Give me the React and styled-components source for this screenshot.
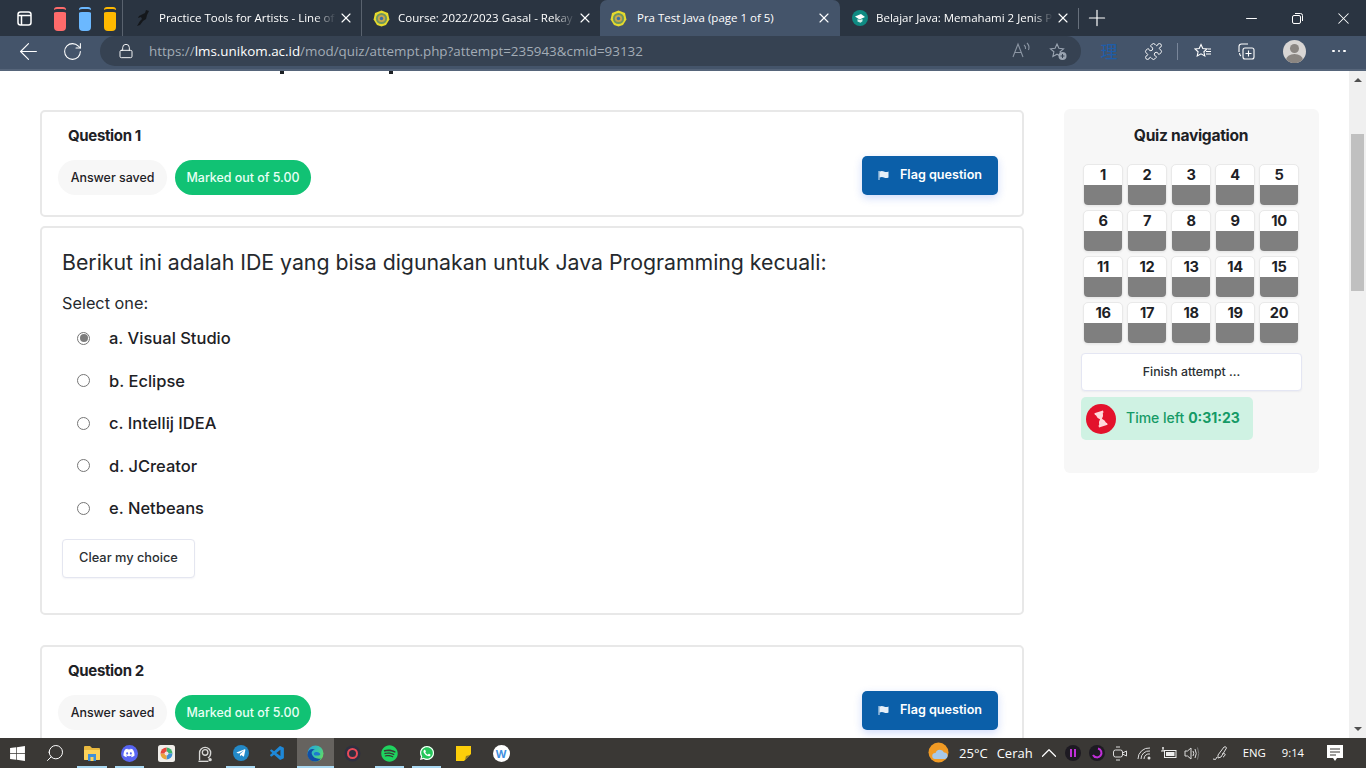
import React from "react";
import styled, { createGlobalStyle } from "styled-components";
import { FaDiscord, FaTelegramPlane, FaSpotify, FaWhatsapp, FaWindows } from "react-icons/fa";
import { VscVscode } from "react-icons/vsc";
import { ArrowLeft, RotateCw, Lock, X, Plus, Minus, ChevronUp, Search, Puzzle } from "lucide-react";

const Global = createGlobalStyle`
  html, body { margin: 0; padding: 0; overflow: hidden; background: #fff; }
  * { box-sizing: border-box; }
`;
const sans = `Inter, "Noto Sans", sans-serif`;
const ui = `"Open Sans", "Noto Sans", sans-serif`;

const Shell = styled.div`
  width: 1366px; height: 768px; display: flex; flex-direction: column; overflow: hidden; font-family: ${sans}; color: #1d2125;
`;
/* ---------- browser chrome ---------- */
const TabStrip = styled.div`
  height: 36px; flex: none; background: #2a3441; display: flex; align-items: stretch; color: #fff;
`;
const StripTools = styled.div`
  width: 122px; flex: none; display: flex; align-items: center; padding-left: 17px;
`;
const Bottle = styled.span`
  width: 12px; height: 24px; margin-left: ${p => p.$ml}px; margin-top: 2px; flex: none; background: ${p => p.$c};
  border-radius: 3px 3px 4px 4px; border-top: 2px solid ${p => p.$c}; position: relative;
  box-shadow: inset 0 3px 0 #2a3441;
`;
const Tab = styled.div`
  width: ${p => p.$w}px; flex: none; display: flex; align-items: center; padding: 0 ${p => p.$active ? 8 : 7}px 0 ${p => p.$active ? 10 : 11}px;
  background: ${p => p.$active ? "#44546a" : "transparent"};
  border-radius: ${p => p.$active ? "7px 7px 0 0" : "0"};
  border-left: ${p => p.$sep ? "1px solid #59626e" : "0"};
  background-clip: ${p => p.$sep ? "padding-box" : "border-box"};
`;
const Fav = styled.span` width: 17px; height: 17px; flex: none; display: flex; align-items: center; justify-content: center; margin-right: ${p => p.$active ? 10 : 8}px; `;
const TabTitle = styled.span`
  flex: 1; font: 11.5px/16px ${ui}; white-space: nowrap; overflow: hidden; color: #fff; margin-right: 2px;
  mask-image: ${p => p.$fade ? "linear-gradient(90deg,#000 88%,transparent 100%)" : "none"};
  -webkit-mask-image: ${p => p.$fade ? "linear-gradient(90deg,#000 88%,transparent 100%)" : "none"};
`;
const TabClose = styled(X)` flex: none; color: #fff; `;
const NewTab = styled.div`
  flex: 1; display: flex; align-items: center;
`;
const Sep = styled.span` width: 1px; height: 21px; background: #67707c; margin-right: 5px; flex: none; `;
const WinBtns = styled.div` display: flex; align-items: center; margin-left: auto; `;
const WinBtn = styled.span` width: 46px; display: flex; justify-content: center; color: #fff; `;

const AddressRow = styled.div`
  height: 35px; flex: none; background: #44546a; border-bottom: 2px solid #56657a;
  display: flex; align-items: center; color: #fff; padding-bottom: 3px;
`;
const NavIcons = styled.div` width: 100px; flex: none; display: flex; align-items: center; padding-left: 15px; gap: 20px; `;
const Pill = styled.div`
  width: 981px; height: 30px; flex: none; border-radius: 15px; background: #364252; display: flex; align-items: center; padding: 0 5px 0 18px;
`;
const Url = styled.span`
  font: 13.4px/18px ${ui}; color: #a3acb6; margin-left: 15px; white-space: nowrap; flex: 1;
  b { color: #fff; font-weight: 400; }
`;
const ToolArea = styled.div` flex: 1; display: flex; align-items: center; color: #fff; padding-left: 6px; `;
const ToolSlot = styled.span` width: ${p => p.$w}px; flex: none; display: flex; justify-content: center; align-items: center; `;
const Kanji = styled.span` font: 17px/20px "Noto Sans CJK SC", sans-serif; color: #1f5da8; `;
const ToolSep = styled.span` width: 1px; height: 17px; background: #79869a; flex: none; margin: 0 1px 0 2px; `;
const Avatar = styled.span`
  width: 23px; height: 23px; border-radius: 50%; background: #d9d6d4; flex: none; display: block; overflow: hidden;
`;
const Dots = styled.span` display: flex; gap: 3px; span { width: 2.5px; height: 2.5px; border-radius: 50%; background: #fff; } `;

/* ---------- page ---------- */
const Viewport = styled.div` flex: 1; min-height: 0; display: flex; overflow: hidden; background: #fff; `;
const Content = styled.div` flex: 1; min-width: 0; position: relative; display: flex; padding: 39px 30px 0 40px; gap: 40px; `;
const Descender = styled.span`
  position: absolute; top: 0; left: ${p => p.$x}px; width: 4px; height: 3px; background: #1d2125;
`;
const Column = styled.div` width: 984px; flex: none; display: flex; flex-direction: column; `;
const Card = styled.section`
  flex: none; border: 2px solid #e8e8e8; border-radius: 5px; background: #fff;
  margin-top: ${p => p.$mt || 0}px;
`;
const InfoCard = styled(Card)` height: 107px; padding: 14px 24px 0 16px; display: flex; justify-content: space-between; `;
const InfoLeft = styled.div` display: flex; flex-direction: column; `;
const QTitle = styled.h3` margin: 0 0 15px 10px; font: 700 15px/19px ${sans}; letter-spacing: -0.35px; color: #1d2125; `;
const Pills = styled.div` display: flex; gap: 8px; `;
const Tag = styled.span`
  height: 35px; width: ${p => p.$w}px; border-radius: 18px; display: flex; align-items: center; justify-content: center;
  font: 500 12.4px/16px ${sans}; background: ${p => p.$green ? "#11c274" : "#f7f7f7"}; color: ${p => p.$green ? "#e8fff4" : "#1d2125"};
`;
const FlagBtn = styled.button`
  width: 136px; height: 39px; margin-top: 30px; border: 0; border-radius: 5px; background: #0b5fa9; color: #fff; display: flex; align-items: center; justify-content: center; gap: 11px;
  font: 600 12.6px/16px ${sans}; padding: 0 0 2px; box-shadow: 0 3px 8px rgba(40,90,230,.22);
`;
const QuestionCard = styled(Card)` height: 389px; margin-top: 9px; padding: 21px 20px 0; `;
const Prompt = styled.div` font: 400 21.3px/27px ${sans}; color: #25292d; letter-spacing: -0.02px; white-space: nowrap; `;
const Select = styled.div` font: 400 16.3px/20px ${sans}; margin-top: 17px; color: #25292d; `;
const Options = styled.div` margin-top: 4px; display: flex; flex-direction: column; `;
const Option = styled.label`
  height: 42.5px; display: flex; align-items: center; font: 500 16.5px/20px ${sans}; color: #1d2125; padding-left: 15px; gap: 19px;
`;
const Radio = styled.span`
  width: 13px; height: 13px; border-radius: 50%; border: 1px solid #767676; background: #fff; flex: none; display: flex; align-items: center; justify-content: center;
  &::after { content: ""; width: 8px; height: 8px; border-radius: 50%; background: ${p => p.$on ? "#7d7d7d" : "transparent"}; }
`;
const ClearBtn = styled.button`
  margin-top: 9px; width: 133px; height: 39px; background: #fff; border: 1px solid #e4e6f0; border-radius: 4px; font: 500 12.8px/16px ${sans}; color: #2b2f33; padding: 0; box-shadow: 0 1px 2px rgba(60,70,120,.06);
`;

const Panel = styled.aside`
  width: 255px; height: 364px; flex: none; margin-top: -1px; border-radius: 6px; background: #f7f7f7; padding: 17px 17px 0 17px; display: flex; flex-direction: column;
`;
const PanelTitle = styled.h3` margin: 0 1px 0 0; font: 700 15.6px/20px ${sans}; letter-spacing: -0.3px; text-align: center; color: #1d2125; `;
const Grid = styled.div` display: grid; grid-template-columns: repeat(5, 40px); column-gap: 4px; row-gap: 4px; margin: 18px 0 0 2px; `;
const Cell = styled.div`
  height: 42px; border: 1px solid #e9e9e9; border-radius: 5px; background: #fff; overflow: hidden; display: flex; flex-direction: column; box-shadow: 0 1px 2px rgba(0,0,0,.05);
`;
const CellNum = styled.span` height: 20px; flex: none; text-align: center; font: 700 14.6px/20px ${sans}; letter-spacing: -0.3px; color: #1d2125; `;
const CellFill = styled.span` flex: 1; background: #7f7f7f; `;
const Finish = styled.button`
  margin-top: 9px; width: 221px; height: 38px; background: #fff; border: 1px solid #e4e6f3; border-radius: 4px; font: 500 12.3px/16px ${sans}; color: #2b2f33; padding: 0; box-shadow: 0 1px 2px rgba(60,70,120,.06);
`;
const Timer = styled.div`
  margin-top: 6px; width: 172px; height: 43px; border-radius: 5px; background: #cff2e3; display: flex; align-items: center; padding-left: 5px; gap: 10px;
  font: 500 14px/18px ${sans}; color: #159a66; white-space: nowrap;
  b { font-weight: 700; }
`;
const TimerText = styled.span` padding-bottom: 2px; `;
const TimerIcon = styled.span` width: 30px; height: 30px; border-radius: 50%; background: #e3122c; flex: none; display: flex; align-items: center; justify-content: center; `;

const Scrollbar = styled.div` width: 17px; flex: none; background: #f0f0f0; display: flex; flex-direction: column; align-items: center; `;
const Arrow = styled.span`
  flex: none; width: 0; height: 0; border-left: 4px solid transparent; border-right: 4px solid transparent;
  ${p => p.$down ? "border-top: 4px solid #505050; margin: auto 0 7px;" : "border-bottom: 4px solid #505050; margin-top: 7px;"}
`;
const Thumb = styled.span` width: 13px; height: 157px; background: #c0c0c0; margin-top: 52px; flex: none; `;

/* ---------- taskbar ---------- */
const Taskbar = styled.div` height: 30px; flex: none; background: #3a3835; display: flex; align-items: stretch; color: #fff; `;
const Apps = styled.div` display: flex; margin-left: -1px; `;
const AppBtn = styled.span`
  width: 37.2px; flex: none; display: flex; align-items: center; justify-content: center; position: relative;
  background: ${p => p.$focus ? "#66635f" : "transparent"};
  &::after { content: ""; display: ${p => p.$run ? "block" : "none"}; position: absolute; bottom: 0; left: ${p => p.$focus ? 0 : 4}px; right: ${p => p.$focus ? 0 : 4}px; height: 2px; background: #a9d8f2; }
`;
const Disc = styled.span`
  width: ${p => p.$s}px; height: ${p => p.$s}px; border-radius: 50%; background: ${p => p.$c}; display: flex; align-items: center; justify-content: center;
`;
const Tray = styled.div` margin-left: auto; display: flex; align-items: center; font: 13px/18px ${ui}; color: #fff; `;
const TrayText = styled.span` flex: none; margin-left: ${p => p.$ml || 0}px; font-size: ${p => p.$fs || 13}px; white-space: nowrap; `;
const TraySlot = styled.span` flex: none; display: flex; justify-content: center; align-items: center; width: ${p => p.$w}px; margin-left: ${p => p.$ml || 0}px; `;
const WBadge = styled.span` width: 17px; height: 17px; border-radius: 50%; background: #fff; color: #3f8fe0; font: 700 11px/17px ${ui}; text-align: center; `;

/* ---------- drawn icons ---------- */
const Unikom = ({ s = 17 }) => (
  <svg width={s} height={s} viewBox="0 0 17 17">
    <path d="M8.5.6 15 3l1.4 6.4-3.4 5.6-4.5 1.4L4 15 .6 9.4 2 3z" fill="#e6da2c" />
    <circle cx="8.5" cy="8.5" r="5.6" fill="#6f9560" />
    <circle cx="8.5" cy="8.5" r="3.6" fill="#c8a84a" />
    <circle cx="8.5" cy="8.5" r="1.7" fill="#3b6ea8" />
  </svg>
);
const Runner = () => (
  <svg width="16" height="16" viewBox="0 0 16 16"><path d="M11 0l3 1-2 4-1 4-3 2-3 4-3 1 3-5 2-2-1-2-3 1 1-2 4-2 2-1z" fill="#14171b" /></svg>
);
const Academy = () => (
  <svg width="16" height="16" viewBox="0 0 16 16"><circle cx="8" cy="8" r="8" fill="#0f8a82" /><path d="M3 6.5 9 4l4 3-5.5 2.5z" fill="#fff" /><path d="M5.5 9v2.5l3 1.2 2-1.5V9L7.500 10z" fill="#d7efe9" /></svg>
);
const TabsIcon = () => (
  <svg width="15" height="15" viewBox="0 0 15 15" fill="none" stroke="#fff" strokeWidth="1.5"><rect x="1" y="1" width="13" height="13" rx="2.500" /><path d="M1 4.500h13M4.500 4.500V14" /></svg>
);
const Restore = () => (
  <svg width="11" height="11" viewBox="0 0 11 11" fill="none" stroke="#fff"><rect x=".5" y="2.500" width="8" height="8" rx="1.500" /><path d="M3 .5h5.500a2 2 0 0 1 2 2V8" /></svg>
);
const ReadAloud = () => (
  <svg width="20" height="18" viewBox="0 0 20 18" fill="none" stroke="#8b95a3" strokeWidth="1.100"><path d="M1 15 6 2l5 13M3 10.500h6" /><path d="M12 3q2 1.500 1.500 4M15 1q3 3 1.500 7" /></svg>
);
const StarPlus = () => (
  <svg width="19" height="19" viewBox="0 0 19 19"><path d="M8 2l1.900 4.300 4.600.5-3.400 3 1 4.600L8 12.200l-4.100 2.200 1-4.600-3.400-3 4.600-.5z" fill="none" stroke="#9aa4b1" strokeWidth="1.100" /><circle cx="13.500" cy="14" r="4" fill="#9aa4b1" /><path d="M11.500 14h4M13.500 12v4" stroke="#364252" /></svg>
);
const Favs = () => (
  <svg width="18" height="17" viewBox="0 0 18 17" fill="none" stroke="#fff" strokeWidth="1.100"><path d="M7 1.500l1.800 4 4.200.5-3.100 2.800.9 4.200L7 10.800l-3.800 2.200.9-4.200L1 6l4.200-.5z" /><path d="M12 8.500h5M12 11h5M14 6h3" /></svg>
);
const Collections = () => (
  <svg width="18" height="18" viewBox="0 0 18 18" fill="none" stroke="#fff" strokeWidth="1.100"><path d="M2 10V4.500A2.500 2.500 0 0 1 4.500 2H11" /><path d="M4 14Q2.500 13 2.500 11" /><rect x="6" y="6" width="11" height="11" rx="2" /><path d="M11.500 8.500v6M8.500 11.500h6" /></svg>
);
const Person = () => (
  <svg width="23" height="23" viewBox="0 0 23 23"><circle cx="11.500" cy="8.500" r="4.500" fill="#8b8682" /><ellipse cx="11.500" cy="20" rx="8.500" ry="6" fill="#8b8682" /></svg>
);
const FlagIcon = () => (
  <svg width="11" height="10" viewBox="0 0 11 10"><path d="M1 1v9" stroke="#dfeaf5" /><path d="M1.500 1.500Q4 .5 6 1.500T10.500 1.500V7.500Q8 8.500 6 7.500T1.500 7.500z" fill="#e6eff8" /></svg>
);
const Hourglass = () => (
  <svg width="16" height="18" viewBox="0 0 16 18"><g transform="rotate(-18 8 9)"><path d="M3.500 1.500h9v2h-.8Q11.500 7 9 9q2.500 2 2.700 5.500h.8v2h-9v-2h.8Q4.500 11 7 9 4.500 7 4.300 3.500h-.8z" fill="#ffd9dc" /></g></svg>
);
const Folder = () => (
  <svg width="18" height="16" viewBox="0 0 18 16"><path d="M1 2a1 1 0 0 1 1-1h5l2 2h7a1 1 0 0 1 1 1v10a1 1 0 0 1-1 1H2a1 1 0 0 1-1-1z" fill="#e9b93f" /><path d="M1 5h16v9a1 1 0 0 1-1 1H2a1 1 0 0 1-1-1z" fill="#fcd25a" /><rect x="5" y="9" width="8" height="7" fill="#3f8fd8" /><rect x="7.500" y="12" width="3" height="4" fill="#fcd25a" /></svg>
);
const PhotoApp = () => (
  <svg width="17" height="17" viewBox="0 0 17 17"><rect width="17" height="17" rx="2.500" fill="#f0eeea" /><path d="M8.500 2.500a6 6 0 0 1 6 6h-6z" fill="#3fb36b" /><path d="M14.500 8.500a6 6 0 0 1-6 6v-6z" fill="#3d8fd6" /><path d="M8.500 14.500a6 6 0 0 1-6-6h6z" fill="#e8a33a" /><path d="M2.500 8.500a6 6 0 0 1 6-6v6z" fill="#e5483c" /><circle cx="8.500" cy="8.500" r="2" fill="#f4dfe0" /></svg>
);
const Recorder = () => (
  <svg width="20" height="20" viewBox="0 0 18 18" fill="none" stroke="#d8d8d6" strokeWidth="1.200"><path d="M5 15.500V9a5 5 0 1 1 10 0c0 2-1 3.500-2.500 4.500" /><circle cx="10" cy="8.500" r="2.500" /><path d="M4 16.500h9" /><circle cx="14.500" cy="15" r="1.500" fill="#d8d8d6" stroke="none" /></svg>
);
const Edge = () => (
  <svg width="17" height="17" viewBox="0 0 17 17">
    <defs><linearGradient id="eg" x1="0" y1="0" x2="1" y2=".6"><stop offset="0" stopColor="#2a9fe0" /><stop offset=".55" stopColor="#35c0b0" /><stop offset="1" stopColor="#5fd86a" /></linearGradient></defs>
    <circle cx="8.500" cy="8.500" r="8" fill="url(#eg)" />
    <path d="M.5 9C1 4.500 5 3 8 4.500c-2.500.5-4 2.500-3 5s4 5 9 4c-1.500 2-3.500 3-5.500 3C3.500 16.500.5 13 .5 9z" fill="#0f4fa8" />
    <path d="M7 8c1-1.500 4-1.500 5.500 0s.5 2.500-1 2.500H8.500C7 10.500 6.500 9 7 8z" fill="#1d78cf" />
  </svg>
);
const RingApp = () => (
  <svg width="17" height="17" viewBox="0 0 17 17"><circle cx="8.500" cy="8.500" r="8" fill="#2e2f40" /><circle cx="8.500" cy="8.500" r="4.500" fill="none" stroke="#ea4a58" strokeWidth="2" /></svg>
);
const Sticky = () => (
  <svg width="15" height="15" viewBox="0 0 15 15"><rect width="15" height="15" fill="#fcce0a" /><path d="M15 8v7H8z" fill="#3a3835" /><path d="M14 9l-5 5 1-4z" fill="#8f7a2b" /></svg>
);
const Weather = () => (
  <svg width="22" height="22" viewBox="0 0 22 22"><circle cx="10.500" cy="10.500" r="10" fill="#f09a24" /><path d="M7 17a3 3 0 0 1 .5-6 4.500 4.500 0 0 1 8.500-.5 3.300 3.300 0 0 1 1 6.500z" fill="#a7c9ea" /></svg>
);
const PauseBadge = () => (
  <svg width="16" height="16" viewBox="0 0 16 16"><circle cx="8" cy="8" r="8" fill="#1d1a22" /><path d="M5 4h2v8H5zM9 4h2v8H9z" fill="#c02fd8" /></svg>
);
const RingBadge = () => (
  <svg width="16" height="16" viewBox="0 0 16 16"><circle cx="8" cy="8" r="8" fill="#1d1a22" /><path d="M9 3.500a4.500 4.500 0 1 1-5 6.500" fill="none" stroke="#c02fd8" strokeWidth="2" /></svg>
);
const CamTray = () => (
  <svg width="16" height="17" viewBox="0 0 16 17" fill="none" stroke="#ddd"><rect x="1.500" y="5" width="9" height="7" rx="2" /><path d="M10.500 8l4-2v5l-4-2M4 2h4M4 15h4" /></svg>
);
const WifiTray = () => (
  <svg width="15" height="15" viewBox="0 0 15 15" fill="none" stroke="#ddd"><path d="M1 13A11 11 0 0 1 13 2M4 13a8 8 0 0 1 9-8M7 13a5 5 0 0 1 6-5" /><circle cx="12" cy="12" r="1.500" fill="#ddd" stroke="none" /></svg>
);
const BatteryTray = () => (
  <svg width="16" height="13" viewBox="0 0 16 13"><rect x="3.500" y="3.500" width="11.500" height="7" fill="none" stroke="#eee" /><rect x="5" y="5" width="8.500" height="4" fill="#eee" /><path d="M0 4h4M2 0v4M1 1h2" stroke="#eee" /></svg>
);
const VolumeTray = () => (
  <svg width="16" height="15" viewBox="0 0 16 15" fill="none" stroke="#ddd"><path d="M1 5h2.500L7 2v11l-3.500-3H1z" /><path d="M9 5q1.500 2.500 0 5M11 3q2.500 4.500 0 9" /><path d="M13.500 1.500q2.500 6 0 12" stroke="#777" /></svg>
);
const PenTray = () => (
  <svg width="17" height="17" viewBox="0 0 17 17" fill="none" stroke="#ddd"><path d="M6 10l6-8q2-1 2.500 1L9 12l-3 1zM1 14q3 2 4-2M10 9q4-1 3 1t-2 2" /></svg>
);
const Bell = () => (
  <svg width="16" height="16" viewBox="0 0 16 16"><path d="M0 0h16v13h-6l-2 3-2-3H0z" fill="#fff" /><path d="M3 4h10M3 7h10M3 10h6" stroke="#3a3835" /></svg>
);

const questions = ["a. Visual Studio", "b. Eclipse", "c. Intellij IDEA", "d. JCreator", "e. Netbeans"];
const numbers = Array.from({ length: 20 }, (_, i) => i + 1);

const Info = ({ n, mt }) => (
  <InfoCard $mt={mt}>
    <InfoLeft>
      <QTitle>Question {n}</QTitle>
      <Pills>
        <Tag $w={109}>Answer saved</Tag>
        <Tag $w={136} $green>Marked out of 5.00</Tag>
      </Pills>
    </InfoLeft>
    <FlagBtn><FlagIcon />Flag question</FlagBtn>
  </InfoCard>
);

export default function App() {
  return (
    <Shell>
      <Global />
      <TabStrip>
        <StripTools>
          <TabsIcon />
          <Bottle $c="#ff6b6b" $ml={22} />
          <Bottle $c="#6bb8ff" $ml={13} />
          <Bottle $c="#ffb900" $ml={13} />
        </StripTools>
        <Tab $w={239} $sep><Fav><Runner /></Fav><TabTitle $fade>Practice Tools for Artists - Line of</TabTitle><TabClose size={16} strokeWidth={1.7} /></Tab>
        <Tab $w={239} $sep><Fav><Unikom /></Fav><TabTitle $fade>Course: 2022/2023 Gasal - Rekay</TabTitle><TabClose size={16} strokeWidth={1.7} /></Tab>
        <Tab $w={240} $active><Fav $active><Unikom /></Fav><TabTitle>Pra Test Java (page 1 of 5)</TabTitle><TabClose size={16} strokeWidth={1.7} /></Tab>
        <Tab $w={238}><Fav><Academy /></Fav><TabTitle $fade>Belajar Java: Memahami 2 Jenis P</TabTitle><TabClose size={16} strokeWidth={1.7} /></Tab>
        <NewTab>
          <Sep />
          <Plus size={26} strokeWidth={1.1} />
          <WinBtns>
            <WinBtn><Minus size={17} strokeWidth={1.4} /></WinBtn>
            <WinBtn><Restore /></WinBtn>
            <WinBtn><X size={19} strokeWidth={1.3} /></WinBtn>
          </WinBtns>
        </NewTab>
      </TabStrip>
      <AddressRow>
        <NavIcons>
          <ArrowLeft size={27} strokeWidth={1} />
          <RotateCw size={21} strokeWidth={1.2} />
        </NavIcons>
        <Pill>
          <Lock size={16} strokeWidth={1.4} color="#fff" />
          <Url>https://<b>lms.unikom.ac.id</b>/mod/quiz/attempt.php?attempt=235943&amp;cmid=93132</Url>
          <ToolSlot $w={36}><ReadAloud /></ToolSlot>
          <ToolSlot $w={36}><StarPlus /></ToolSlot>
        </Pill>
        <ToolArea>
          <ToolSlot $w={44}><Kanji>理</Kanji></ToolSlot>
          <ToolSlot $w={44}><Puzzle size={19} strokeWidth={1.2} /></ToolSlot>
          <ToolSep />
          <ToolSlot $w={48}><Favs /></ToolSlot>
          <ToolSlot $w={38}><Collections /></ToolSlot>
          <ToolSlot $w={58}><Avatar><Person /></Avatar></ToolSlot>
          <ToolSlot $w={32}><Dots><span /><span /><span /></Dots></ToolSlot>
        </ToolArea>
      </AddressRow>
      <Viewport>
        <Content>
          <Descender $x={280} />
          <Descender $x={389} />
          <Column>
            <Info n={1} />
            <QuestionCard>
              <Prompt>Berikut ini adalah IDE yang bisa digunakan untuk Java Programming kecuali:</Prompt>
              <Select>Select one:</Select>
              <Options>
                {questions.map((q, i) => (
                  <Option key={q}><Radio $on={i === 0} />{q}</Option>
                ))}
              </Options>
              <ClearBtn>Clear my choice</ClearBtn>
            </QuestionCard>
            <Info n={2} mt={30} />
          </Column>
          <Panel>
            <PanelTitle>Quiz navigation</PanelTitle>
            <Grid>
              {numbers.map(n => (
                <Cell key={n}><CellNum>{n}</CellNum><CellFill /></Cell>
              ))}
            </Grid>
            <Finish>Finish attempt ...</Finish>
            <Timer><TimerIcon><Hourglass /></TimerIcon><TimerText>Time left <b>0:31:23</b></TimerText></Timer>
          </Panel>
        </Content>
        <Scrollbar>
          <Arrow />
          <Thumb />
          <Arrow $down />
        </Scrollbar>
      </Viewport>
      <Taskbar>
        <Apps>
          <AppBtn><FaWindows size={17} /></AppBtn>
          <AppBtn><Search size={20} strokeWidth={1.2} style={{ transform: "scaleX(-1)" }} /></AppBtn>
          <AppBtn $run><Folder /></AppBtn>
          <AppBtn $run><Disc $s={17} $c="#5865f2"><FaDiscord size={12} color="#fff" /></Disc></AppBtn>
          <AppBtn><PhotoApp /></AppBtn>
          <AppBtn><Recorder /></AppBtn>
          <AppBtn $run><Disc $s={16} $c="#2389c7"><FaTelegramPlane size={10} color="#fff" /></Disc></AppBtn>
          <AppBtn><VscVscode size={17} color="#1e88d8" /></AppBtn>
          <AppBtn $run $focus><Edge /></AppBtn>
          <AppBtn><RingApp /></AppBtn>
          <AppBtn $run><FaSpotify size={17} color="#1fd35f" /></AppBtn>
          <AppBtn $run><Disc $s={14} $c="#25c65a"><FaWhatsapp size={18} color="#fff" /></Disc></AppBtn>
          <AppBtn><Sticky /></AppBtn>
          <AppBtn><WBadge>W</WBadge></AppBtn>
        </Apps>
        <Tray>
          <Weather />
          <TrayText $ml={9}>25°C</TrayText>
          <TrayText $ml={9}>Cerah</TrayText>
          <TraySlot $w={28} $ml={2}><ChevronUp size={26} strokeWidth={1.1} /></TraySlot>
          <TraySlot $w={20}><PauseBadge /></TraySlot>
          <TraySlot $w={28}><RingBadge /></TraySlot>
          <TraySlot $w={18}><CamTray /></TraySlot>
          <TraySlot $w={32}><WifiTray /></TraySlot>
          <TraySlot $w={16}><BatteryTray /></TraySlot>
          <TraySlot $w={30}><VolumeTray /></TraySlot>
          <TraySlot $w={28}><PenTray /></TraySlot>
          <TrayText $ml={8} $fs={11.4}>ENG</TrayText>
          <TrayText $ml={16} $fs={11.2}>9:14</TrayText>
          <TraySlot $w={62}><Bell /></TraySlot>
        </Tray>
      </Taskbar>
    </Shell>
  );
}
